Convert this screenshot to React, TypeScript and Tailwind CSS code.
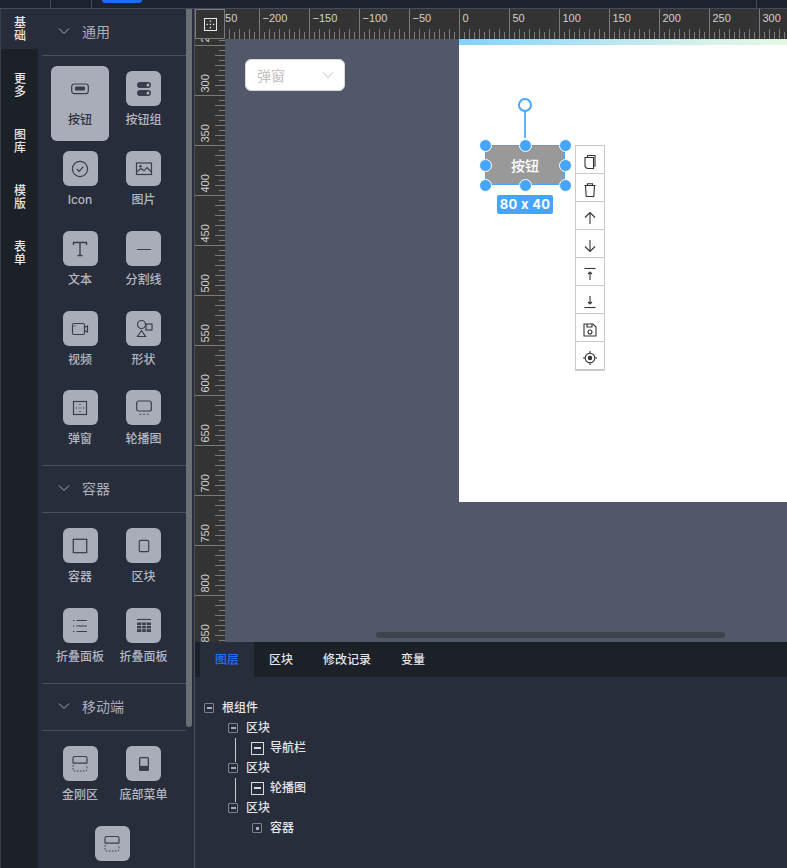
import { ReactNode } from 'react';

const FONT = 'font-["Inter","Noto_Sans_CJK_SC",sans-serif]';

const Svg = ({ children, size = 24 }: { children: ReactNode; size?: number }) => (
  <svg width={size} height={size} viewBox="0 0 24 24" fill="none" stroke="#3a3e4c" strokeWidth="1.2">
    {children}
  </svg>
);

const BlockIcon = () => (
  <Svg>
    <path d="M5 11.2V6a1.5 1.5 0 0 1 1.5-1.5h11A1.5 1.5 0 0 1 19 6v5.2M5 11.2h14" />
    <path d="M5 13v4.5A1.5 1.5 0 0 0 6.5 19h11a1.5 1.5 0 0 0 1.5-1.5V13" strokeDasharray="1.6 1.4" strokeWidth="1" />
  </Svg>
);

const icons: Record<string, ReactNode> = {
  button: (
    <Svg>
      <rect x="3.7" y="7" width="16.6" height="9.6" rx="2.5" />
      <rect x="7" y="9.6" width="10" height="4" rx="1" fill="#3a3e4c" stroke="none" />
    </Svg>
  ),
  group: (
    <Svg>
      <rect x="5" y="5" width="14" height="6" rx="3" fill="#3a3e4c" stroke="none" />
      <circle cx="16" cy="8" r="1.6" fill="#a9adba" stroke="none" />
      <rect x="5" y="13" width="14" height="6" rx="3" fill="#3a3e4c" stroke="none" />
      <circle cx="16" cy="16" r="1.6" fill="#a9adba" stroke="none" />
    </Svg>
  ),
  icon: (
    <Svg>
      <circle cx="12" cy="12" r="7.6" />
      <path d="M8.8 12l2.3 2.3 4.2-4.6" />
    </Svg>
  ),
  image: (
    <Svg>
      <rect x="4.5" y="6" width="15" height="11.5" />
      <circle cx="8.5" cy="9.3" r="1.2" fill="#3a3e4c" stroke="none" />
      <path d="M4.5 15l4.5-3.5 3 2.3 3-3.3 4.5 4.5" />
    </Svg>
  ),
  text: (
    <Svg>
      <path d="M5.5 8V5.5h13V8M12 5.5V18.5M9.5 18.5h5" strokeWidth="1.4" />
    </Svg>
  ),
  line: (
    <Svg>
      <path d="M5 12.5h14" strokeWidth="1" />
    </Svg>
  ),
  video: (
    <Svg>
      <rect x="4.5" y="6.5" width="12" height="11" rx="1.5" />
      <rect x="6" y="8" width="1.6" height="1.6" fill="#3a3e4c" fillOpacity="0.5" stroke="none" />
      <path d="M16.5 10.5l3-1.5v6l-3-1.5" />
    </Svg>
  ),
  shape: (
    <Svg>
      <circle cx="9.5" cy="7.5" r="4" />
      <rect x="14" y="7" width="6" height="6" />
      <path d="M9.5 13.5l4 6h-8z" />
    </Svg>
  ),
  modal: (
    <Svg>
      <rect x="5.5" y="5.5" width="13" height="13" />
      <path d="M12 8v1.2M12 11.4v1.2M12 14.8V16M8 12h1.2M10.6 12h.2M13.2 12h.2M14.8 12H16" strokeWidth="1" />
    </Svg>
  ),
  carousel: (
    <Svg>
      <rect x="4.7" y="5" width="14.6" height="10" rx="2" />
      <path d="M7.5 18.3h1.6M11.2 18.3h1.6M14.9 18.3h1.6" strokeWidth="1" />
    </Svg>
  ),
  container: (
    <Svg>
      <rect x="5.3" y="5.3" width="13.4" height="13.4" strokeWidth="1.3" />
    </Svg>
  ),
  block: (
    <Svg>
      <rect x="7.3" y="6.3" width="9.4" height="11.4" rx="1.2" strokeWidth="1.2" />
    </Svg>
  ),
  list: (
    <Svg>
      <path d="M8.5 6.5h10.5M8.5 12h10.5M8.5 17.5h10.5M5 6.5h1.3M5 12h1.3M5 17.5h1.3" />
    </Svg>
  ),
  table: (
    <Svg>
      <path d="M5 5.5h14" />
      <rect x="5" y="8.5" width="14" height="9.5" fill="#3a3e4c" stroke="none" />
      <path d="M5 11.5h14M5 14.8h14M9.7 8.5V18M14.3 8.5V18" stroke="#a9adba" strokeWidth="0.8" />
    </Svg>
  ),
  kingkong: <BlockIcon />,
  tabbar: (
    <Svg>
      <rect x="7" y="5" width="10" height="14" rx="1.5" fill="#3a3e4c" stroke="none" />
      <rect x="8.3" y="6.3" width="7.4" height="7.5" fill="#a9adba" stroke="none" />
    </Svg>
  ),
};

type Item = { label: string; icon: string; active?: boolean; tight?: boolean };

const groups: { title: string; items: Item[] }[] = [
  {
    title: '通用',
    items: [
      { label: '按钮', icon: 'button', active: true },
      { label: '按钮组', icon: 'group' },
      { label: 'Icon', icon: 'icon' },
      { label: '图片', icon: 'image' },
      { label: '文本', icon: 'text' },
      { label: '分割线', icon: 'line' },
      { label: '视频', icon: 'video' },
      { label: '形状', icon: 'shape' },
      { label: '弹窗', icon: 'modal', tight: true },
      { label: '轮播图', icon: 'carousel', tight: true },
    ],
  },
  {
    title: '容器',
    items: [
      { label: '容器', icon: 'container' },
      { label: '区块', icon: 'block' },
      { label: '折叠面板', icon: 'list' },
      { label: '折叠面板', icon: 'table' },
    ],
  },
  {
    title: '移动端',
    items: [
      { label: '金刚区', icon: 'kingkong' },
      { label: '底部菜单', icon: 'tabbar' },
    ],
  },
];

const Chevron = ({ color = '#a9adba' }: { color?: string }) => (
  <svg width="12" height="8" viewBox="0 0 12 8" fill="none" stroke={color} strokeWidth="1">
    <path d="M1 1.5l5 5 5-5" />
  </svg>
);

const Tile = ({ icon }: { icon: string }) => (
  <div className="w-[35px] h-[35px] rounded-md bg-[#a9adba] flex items-center justify-center shrink-0">
    {icons[icon]}
  </div>
);

const PaletteItem = ({ item }: { item: Item }) => (
  <div className={`flex justify-center ${item.tight ? '-mt-px' : ''}`}>
    <div
      className={`w-[58px] h-[75px] pt-[5px] rounded-md flex flex-col items-center ${
        item.active ? 'bg-[#a9adba]' : ''
      }`}
    >
      <Tile icon={item.icon} />
      <span
        className={`mt-[6px] text-[12px] leading-4 font-medium whitespace-nowrap ${
          item.active ? 'text-[#2c3140]' : 'text-[#b4b7c1]'
        }`}
      >
        {item.label}
      </span>
    </div>
  </div>
);

const Sidebar = () => (
  <aside className="w-[195px] flex border-r border-[#4a5060] shrink-0 overflow-hidden">
    <nav className="w-[38px] bg-[#1c2027] border-l border-[#3a3f4b] text-[#e4e5e8] text-[12px] leading-[13px] font-medium shrink-0">
      {['基础', '更多', '图库', '模版', '表单'].map((t, i) => (
        <div
          key={t}
          className={`h-[40px] mb-4 pl-px flex items-center justify-center ${i === 0 ? 'bg-[#282d3b]' : ''}`}
        >
          <span className="w-3 text-center">{t}</span>
        </div>
      ))}
    </nav>
    <div className="w-[148px] bg-[#282d3b] shrink-0">
      {groups.map((g, gi) => (
        <section key={g.title}>
          <div
            className={`ml-1 flex items-center pl-[16px] pb-[2px] gap-[12px] border-b border-[#4a5060] ${
              gi > 0 ? 'h-[48px] border-t' : 'h-[47px]'
            }`}
          >
            <Chevron />
            <span className="text-[14px] text-[#a9adba]">{g.title}</span>
          </div>
          <div className="grid grid-cols-[64px_63px] gap-y-[5px] pl-[10px] pt-[10px] pb-[5px]">
            {g.items.map((item, i) => (
              <PaletteItem key={i} item={item} />
            ))}
          </div>
        </section>
      ))}
      <div className="flex justify-center pt-[5px]">
        <div className="w-[35px] h-[35px] rounded-md bg-[#a9adba] flex items-center justify-center">
          <BlockIcon />
        </div>
      </div>
    </div>
    <div className="w-2 bg-[#282d3b] shrink-0">
      <div className="w-[6px] h-[718px] rounded-b-md bg-[#6b6e75]" />
    </div>
  </aside>
);

const range = (from: number, to: number, step: number) => {
  const out: number[] = [];
  for (let v = from; v <= to; v += step) out.push(v);
  return out;
};

// top ruler: value 0 sits 234px from the left edge of the strip
const TopRuler = () => (
  <svg width="562" height="30" className="block" fontFamily="'Liberation Sans', sans-serif">
    {range(-235, 325, 5).map((v) => {
      const x = v + 234.5;
      if (v % 50 === 0) return <line key={v} x1={x} x2={x} y1="0" y2="30" stroke="#7b7b7b" />;
      return <line key={v} x1={x} x2={x} y1={v % 10 === 0 ? 20 : 23} y2="30" stroke="#7b7b7b" />;
    })}
    {range(-250, 300, 50).map((v) => (
      <text key={v} x={v + 237.5} y="13" fontSize="11" fill="#d0d0d0">
        {v < 0 ? `−${-v}` : v}
      </text>
    ))}
  </svg>
);

// left ruler: value 300 sits at 56px from the top of the strip
const LeftRuler = () => (
  <svg width="30" height="603" className="block shrink-0 bg-[#333333]" fontFamily="'Liberation Sans', sans-serif">
    {range(245, 850, 5).map((v) => {
      const y = v - 243.5;
      if (v % 50 === 0) return <line key={v} x1="0" x2="30" y1={y} y2={y} stroke="#7b7b7b" />;
      return <line key={v} x1={v % 10 === 0 ? 20 : 24} x2="30" y1={y} y2={y} stroke="#7b7b7b" />;
    })}
    {range(250, 850, 50).map((v) => {
      const y = v - 246.5;
      return (
        <text key={v} x="0" y="0" fontSize="11" fill="#d0d0d0" transform={`translate(14 ${y}) rotate(-90)`}>
          {v}
        </text>
      );
    })}
  </svg>
);

const Handle = ({ className }: { className: string }) => (
  <span className={`absolute w-[13px] h-[13px] rounded-full bg-[#46a6ff] border border-white ${className}`} />
);

const ToolIcon = ({ children }: { children: ReactNode }) => (
  <svg width="16" height="16" viewBox="0 0 16 16" fill="none" stroke="#333" strokeWidth="1.1">
    {children}
  </svg>
);

const tools: ReactNode[] = [
  <>
    <path d="M5.5 3V1.5h7.5v10.5h-1.5" />
    <path d="M3 3.5h8.5v11H5l-2-2z" />
  </>,
  <>
    <path d="M2.5 3.5h11M5.5 3.5V1.7h5v1.8M3.5 3.5l.7 11h7.6l.7-11" />
  </>,
  <path d="M8 14V2.5M3 7.5l5-5 5 5" />,
  <path d="M8 2v11.5M3 8.5l5 5 5-5" />,
  <>
    <path d="M2.5 2.5h11" />
    <path d="M8 14V6M6 8l2-2 2 2" />
  </>,
  <>
    <path d="M2.5 13.5h11" />
    <path d="M8 2v8M6 8l2 2 2-2" />
  </>,
  <>
    <path d="M2 2h9l3 3v9H2z" />
    <path d="M5 2v3h5V2" />
    <circle cx="8" cy="10" r="2" />
  </>,
  <>
    <circle cx="8" cy="8" r="4.8" />
    <circle cx="8" cy="8" r="2.2" fill="#333" stroke="none" />
    <path d="M8 1v2.2M8 12.8V15M1 8h2.2M12.8 8H15" />
  </>,
];

const Canvas = () => (
  <div className="flex-1 relative overflow-hidden bg-[#505869]">
    <div className="absolute left-[234px] top-0 w-[400px] h-[463px] bg-white">
      <div className="h-[6px] bg-gradient-to-r from-[#7fd3ff] via-[#c9ecec] to-[#f6ffe0]" />

      <div className="absolute left-[65px] top-[66px] w-[2px] h-[33px] bg-[#5cb3ff]" />
      <span className="absolute left-[59px] top-[59px] w-[14px] h-[14px] rounded-full bg-white border-2 border-[#46a6ff]" />

      <div className="absolute left-[26px] top-[106px] w-[80px] h-[40px] bg-[#999999] border border-[#46a6ff] flex items-center justify-center text-white text-[14px] font-medium">
        按钮
      </div>
      <Handle className="left-[20px] top-[100px]" />
      <Handle className="left-[60px] top-[100px]" />
      <Handle className="left-[100px] top-[100px]" />
      <Handle className="left-[20px] top-[120px]" />
      <Handle className="left-[100px] top-[120px]" />
      <Handle className="left-[20px] top-[140px]" />
      <Handle className="left-[60px] top-[140px]" />
      <Handle className="left-[100px] top-[140px]" />

      <div className="absolute left-[38px] top-[156px] w-[56px] h-[19px] rounded-[2px] bg-[#46a6ff] text-white text-[13px] leading-[19px] font-bold text-center tracking-[0.3px]">
        80 x 40
      </div>

      <div className="absolute left-[116px] top-[106px] w-[30px] bg-white border border-[#c9c9c9] border-b-2">
        {tools.map((t, i) => (
          <div
            key={i}
            className={`pt-[5px] flex items-center justify-center ${
              i > 0 ? 'h-[28px] border-t border-[#c9c9c9]' : 'h-[27px]'
            }`}
          >
            <ToolIcon>{t}</ToolIcon>
          </div>
        ))}
      </div>
    </div>

    <div className="absolute left-[20px] top-[20px] w-[100px] h-[32px] rounded-md bg-white border border-[#d9d9d9] flex items-center justify-between pl-[11px] pr-[10px] text-[14px] text-[#bfbfbf]">
      <span>弹窗</span>
      <Chevron color="#bfbfbf" />
    </div>

    <div className="absolute left-[151px] bottom-[4px] w-[349px] h-[6px] rounded-full bg-[#3d424c]" />
  </div>
);

type Node = { label: string; indent: number; box: 'gray' | 'white' | 'dot'; line?: boolean };

const tree: Node[] = [
  { label: '根组件', indent: 9, box: 'gray' },
  { label: '区块', indent: 33, box: 'gray' },
  { label: '导航栏', indent: 56, box: 'white', line: true },
  { label: '区块', indent: 33, box: 'gray' },
  { label: '轮播图', indent: 56, box: 'white', line: true },
  { label: '区块', indent: 33, box: 'gray' },
  { label: '容器', indent: 57, box: 'dot' },
];

const TreeBox = ({ type }: { type: Node['box'] }) => {
  if (type === 'white')
    return (
      <span className="w-[13px] h-[13px] border border-[#d8dae0] flex items-center justify-center shrink-0">
        <span className="w-[7px] h-[1.5px] bg-[#d8dae0]" />
      </span>
    );
  return (
    <span className="w-[10px] h-[10px] border-[1.5px] border-[#7f828c] rounded-[1px] flex items-center justify-center shrink-0">
      {type === 'dot' ? (
        <span className="w-[3px] h-[3px] bg-[#a9adba]" />
      ) : (
        <span className="w-[5px] h-[1.5px] bg-[#a9adba]" />
      )}
    </span>
  );
};

const BottomPanel = () => (
  <div className="h-[226px] bg-[#282d3b] shrink-0">
    <div className="h-[35px] pl-[5px] flex bg-[#1c2027] text-[12px] font-medium text-[#e4e5e8]">
      {['图层', '区块', '修改记录', '变量'].map((t, i) => (
        <div
          key={t}
          className={`px-[15px] flex items-center ${i === 0 ? 'bg-[#282d3b] text-[#1f6fff]' : ''}`}
        >
          {t}
        </div>
      ))}
    </div>
    <div className="pt-[21px]">
      {tree.map((n, i) => (
        <div
          key={i}
          className="relative h-5 flex items-center text-[12px] font-medium text-[#e4e5e8]"
          style={{ paddingLeft: n.indent }}
        >
          {n.line && <span className="absolute left-[40px] top-0 w-px h-[24px] bg-[#c9cbd2]" />}
          <TreeBox type={n.box} />
          <span className={n.box === 'white' ? 'ml-[6px]' : 'ml-2'}>{n.label}</span>
        </div>
      ))}
    </div>
  </div>
);

export default function App() {
  return (
    <div className={`w-[787px] h-[868px] overflow-hidden flex flex-col bg-[#282d3b] ${FONT}`}>
      <header className="h-[9px] shrink-0 relative bg-[#1c2230] border-b border-[#434b5c] flex">
        <div className="w-[51px] h-full border-r border-[#434b5c]" />
        <div className="w-[41px] h-full border-r border-[#434b5c]" />
        <div className="ml-[10px] w-[40px] h-[3px] rounded-b-md bg-[#1a6cff]" />
        <div className="ml-auto mr-[30px] w-px h-full bg-[#434b5c]" />
      </header>
      <div className="flex-1 flex min-h-0">
        <Sidebar />
        <main className="flex-1 flex flex-col min-w-0">
          <div className="h-[30px] flex bg-[#333333] shrink-0">
            <div className="w-[30px] h-[30px] border border-[#7b7b7b] bg-[#333333] flex items-center justify-center shrink-0">
              <span className="w-[13px] h-[13px] border border-[#e8e8e8] flex items-center justify-center">
                <svg width="9" height="9" viewBox="0 0 9 9" fill="#e8e8e8">
                  <rect x="3.8" y="0.5" width="1.3" height="1.3" />
                  <rect x="3.8" y="3.8" width="1.3" height="1.3" />
                  <rect x="3.8" y="7" width="1.3" height="1.3" />
                  <rect x="0.5" y="3.8" width="1.3" height="1.3" />
                  <rect x="7" y="3.8" width="1.3" height="1.3" />
                </svg>
              </span>
            </div>
            <TopRuler />
          </div>
          <div className="flex-1 flex min-h-0">
            <LeftRuler />
            <Canvas />
          </div>
          <BottomPanel />
        </main>
      </div>
    </div>
  );
}
